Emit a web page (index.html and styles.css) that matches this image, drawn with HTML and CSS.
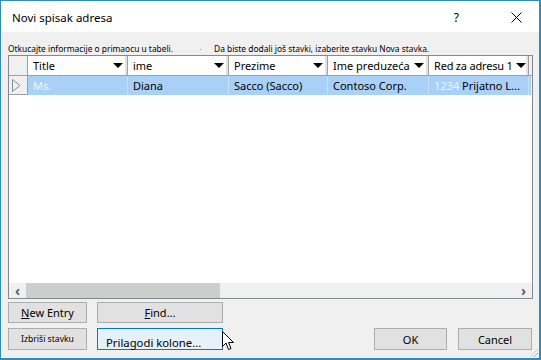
FILE: index.html
```html
<!DOCTYPE html>
<html lang="sr">
<head>
    <meta charset="UTF-8">
    <title>Novi spisak adresa</title>
    <link rel="stylesheet" href="styles.css">
</head>
<body>
    <div class="window">
        <div class="titlebar">
            <span class="title">Novi spisak adresa</span>
            <span class="help">?</span>
            <svg class="close" width="11" height="11" viewBox="0 0 11 11">
                <path d="M0.5 0.5 L10.5 10.5 M10.5 0.5 L0.5 10.5" stroke="#000" stroke-width="1"/>
            </svg>
        </div>

        <div class="content">
            <div class="hints">
                <span class="hint">Otkucajte informacije o primaocu u tabeli.</span>
                <span class="dot"></span>
                <span class="hint">Da biste dodali još stavki, izaberite stavku Nova stavka.</span>
            </div>

            <div class="grid">
                <div class="grid-head">
                    <div class="corner"></div>
                    <div class="col"><span class="label">Title</span><svg class="arrow" width="10" height="6" viewBox="0 0 10 6"><polygon points="0,0 10,0 5,5" fill="#000"/></svg></div>
                    <div class="col"><span class="label">ime</span><svg class="arrow" width="10" height="6" viewBox="0 0 10 6"><polygon points="0,0 10,0 5,5" fill="#000"/></svg></div>
                    <div class="col"><span class="label">Prezime</span><svg class="arrow" width="10" height="6" viewBox="0 0 10 6"><polygon points="0,0 10,0 5,5" fill="#000"/></svg></div>
                    <div class="col"><span class="label">Ime preduzeća</span><svg class="arrow" width="10" height="6" viewBox="0 0 10 6"><polygon points="0,0 10,0 5,5" fill="#000"/></svg></div>
                    <div class="col last"><span class="label">Red za adresu 1</span><svg class="arrow" width="10" height="6" viewBox="0 0 10 6"><polygon points="0,0 10,0 5,5" fill="#000"/></svg></div>
                    <div class="filler"></div>
                </div>
                <div class="grid-row">
                    <div class="selector">
                        <svg width="9" height="13" viewBox="0 0 9 13"><polygon points="0.5,0.5 8,6.5 0.5,12.5" fill="none" stroke="#7f8ea3"/></svg>
                    </div>
                    <div class="cell hint-text">Ms.</div>
                    <div class="cell">Diana</div>
                    <div class="cell">Sacco (Sacco)</div>
                    <div class="cell">Contoso Corp.</div>
                    <div class="cell"><span class="hint-text">1234</span>&nbsp;Prijatno L...</div>
                    <div class="row-end"></div>
                </div>
                <div class="grid-empty"></div>
                <div class="hscroll">
                    <span class="scroll-arrow">&#8249;</span>
                    <div class="track"><div class="thumb"></div></div>
                    <span class="scroll-arrow">&#8250;</span>
                </div>
            </div>

            <div class="actions">
                <div class="left-buttons">
                    <button class="btn"><u>N</u>ew Entry</button>
                    <button class="btn"><u>F</u>ind...</button>
                    <button class="btn small">Izbriši stavku</button>
                    <button class="btn focused">Prilagodi kolone...</button>
                    <svg class="cursor" width="13" height="20" viewBox="0 0 13 20">
                        <path d="M0.5 0.5 L0.5 15.5 L4 12 L6.5 18.5 L9 17.5 L6.5 11.5 L11.5 11.5 Z" fill="#fff" stroke="#000" stroke-width="1"/>
                    </svg>
                </div>
                <div class="right-buttons">
                    <button class="btn ok">OK</button>
                    <button class="btn cancel">Cancel</button>
                </div>
            </div>
        </div>
        <div class="grip"></div>
    </div>
</body>
</html>
```

FILE: styles.css
```css
/* Base */
body {
    margin: 0;
    padding: 0;
    font-family: "Noto Sans", sans-serif;
    background-color: #f0f0f0;
}
.window {
    position: relative;
    width: 541px;
    height: 360px;
    box-sizing: border-box;
    border: 1px solid #2f8dbb;
    border-right-width: 2px;
    border-bottom-width: 2px;
    background-color: #f0f0f0;
    display: flex;
    flex-direction: column;
}
/* Title bar */
.titlebar {
    height: 31px;
    background-color: #fff;
    display: flex;
    align-items: center;
    padding: 0 17px 0 11px;
}
.title {
    font-size: 11.5px;
    color: #000;
    flex: 1;
    padding-top: 2px;
}
.help {
    font-size: 12px;
    margin-right: 52px;
    padding-top: 1px;
}
.close {
    margin-top: 1px;
}
/* Content */
.content {
    flex: 1;
    display: flex;
    flex-direction: column;
    padding: 0 7px 8px 7px;
}
.hints {
    height: 23px;
    display: flex;
    align-items: flex-end;
    padding-bottom: 1px;
    box-sizing: border-box;
    font-size: 8.4px;
    color: #000;
}
.dot {
    width: 1px;
    height: 1px;
    background-color: #5ab0e0;
    margin: 0 13px 4px 27px;
}
/* Data grid */
.grid {
    width: 525px;
    height: 244px;
    box-sizing: border-box;
    border: 1px solid #828790;
    background-color: #fff;
    display: flex;
    flex-direction: column;
}
.grid-head, .grid-row {
    display: grid;
    grid-template-columns: 19px 100px 101px 99px 101px 100px 1fr;
}
.grid-head {
    height: 20px;
    font-size: 11px;
    line-height: 14px;
}
.corner {
    background-color: #f0f0f0;
    border-right: 1px solid #a0a0a0;
    border-bottom: 1px solid #a0a0a0;
}
.col {
    display: flex;
    align-items: center;
    justify-content: space-between;
    padding: 0 4px 0 5px;
    background-color: #fff;
    border-right: 1px solid #a0a0a0;
    border-bottom: 1px solid #a0a0a0;
    box-shadow: inset -2px 0 0 #e3e3e3;
    white-space: nowrap;
    overflow: hidden;
}
.label {
    overflow: hidden;
}
.arrow {
    flex-shrink: 0;
}
.col.last {
    padding-right: 2px;
    letter-spacing: -0.2px;
}
.col.last .arrow {
    margin-left: 1px;
}
.filler {
    background-color: #f0f0f0;
    border-bottom: 1px solid #a0a0a0;
}
.grid-row {
    height: 19px;
    font-size: 11px;
    line-height: 14px;
}
.selector {
    background-color: #f0f0f0;
    border-right: 1px solid #a0a0a0;
    border-bottom: 1px solid #a0a0a0;
    display: flex;
    align-items: center;
    padding-left: 3px;
}
.cell {
    background-color: #a9d1f7;
    border-right: 1px solid #c7e1fa;
    display: flex;
    align-items: center;
    padding-left: 5px;
    white-space: nowrap;
    overflow: hidden;
    color: #000;
}
.row-end {
    background-color: #a9d1f7;
    width: 2px;
}
.hint-text {
    color: #eef6ff;
}
.grid-empty {
    flex: 1;
}
/* Horizontal scrollbar */
.hscroll {
    height: 15px;
    display: flex;
    align-items: center;
    background-color: #f0f0f0;
}
.scroll-arrow {
    width: 17px;
    text-align: center;
    font-size: 14px;
    font-weight: bold;
    color: #606060;
    line-height: 15px;
}
.track {
    flex: 1;
    height: 15px;
}
.thumb {
    width: 194px;
    height: 15px;
    background-color: #cdcdcd;
}
/* Buttons */
.actions {
    display: flex;
    justify-content: space-between;
    align-items: flex-end;
    margin-top: 3px;
}
.left-buttons {
    position: relative;
    display: grid;
    grid-template-columns: 79px 126px;
    grid-template-rows: 21px 22px;
    column-gap: 10px;
    row-gap: 5px;
}
.right-buttons {
    display: flex;
    gap: 11px;
}
.btn {
    font-family: "Noto Sans", sans-serif;
    font-size: 11px;
    color: #000;
    background-color: #e1e1e1;
    border: 1px solid #adadad;
    padding: 0;
    margin: 0;
    height: 100%;
}
.btn.small {
    font-size: 8.6px;
}
.btn.focused {
    background-color: #e5f1fb;
    border-color: #0078d7;
    text-align: left;
    padding: 6px 0 0 8px;
    font-size: 11.3px;
}
.btn.ok {
    width: 73px;
    height: 22px;
}
.btn.cancel {
    width: 74px;
    height: 22px;
}
.cursor {
    position: absolute;
    left: 214px;
    top: 29px;
}
.grip {
    position: absolute;
    right: 1px;
    bottom: 1px;
    width: 8px;
    height: 8px;
    background: repeating-linear-gradient(135deg, transparent 0 2px, #b0b0b0 2px 3px);
    clip-path: polygon(100% 0, 100% 100%, 0 100%);
}
```
